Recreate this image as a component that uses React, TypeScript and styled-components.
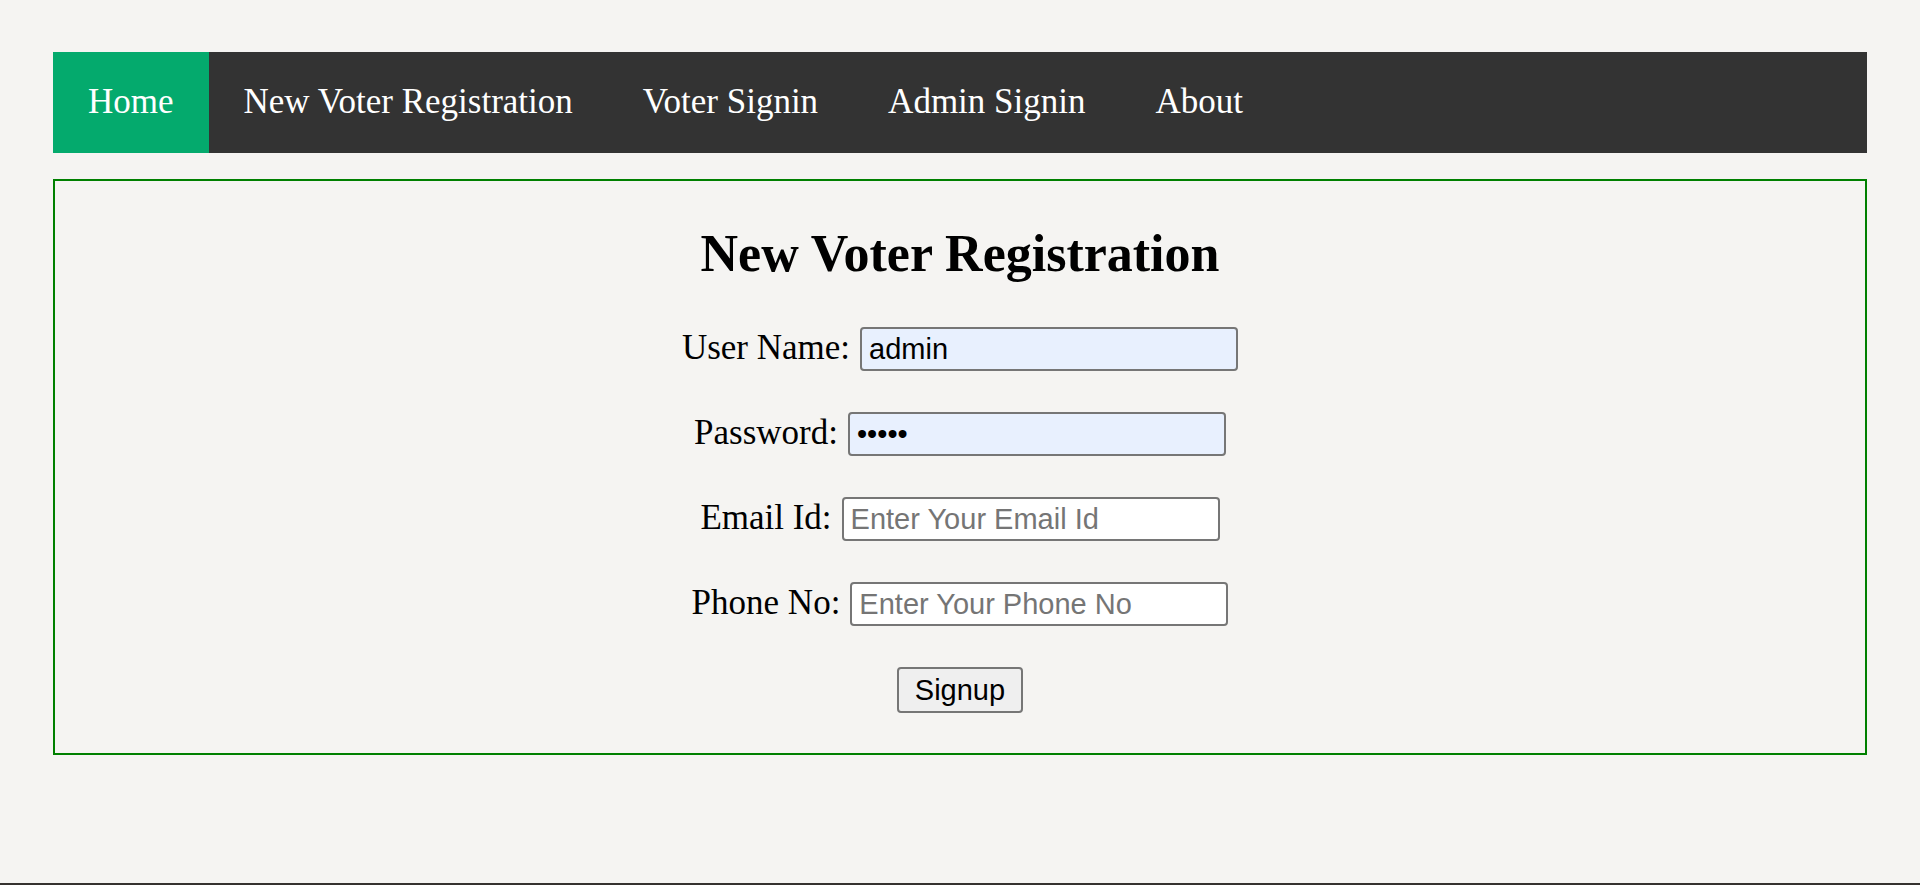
import styled, { createGlobalStyle } from "styled-components";

type NavLinkProps = {
  $active?: boolean;
};

type FieldInputProps = {
  $filled?: boolean;
};

const fields = [
  { label: "User Name:", type: "text", value: "admin", placeholder: "Enter Your User Name" },
  { label: "Password:", type: "password", value: "admin", placeholder: "Enter Your Password" },
  { label: "Email Id:", type: "text", value: "", placeholder: "Enter Your Email Id" },
  { label: "Phone No:", type: "text", value: "", placeholder: "Enter Your Phone No" },
];

const navItems = ["Home", "New Voter Registration", "Voter Signin", "Admin Signin", "About"];

export default function App() {
  return (
    <>
      <GlobalStyle />
      <Page>
        <NavBar>
          {navItems.map((item, i) => (
            <NavLink key={item} href="#" $active={i === 0}>
              {item}
            </NavLink>
          ))}
        </NavBar>
        <FormBox>
          <Heading>New Voter Registration</Heading>
          <Fields>
            {fields.map((f) => (
              <FieldRow key={f.label}>
                <FieldLabel>{f.label}</FieldLabel>
                <FieldInput
                  type={f.type}
                  defaultValue={f.value}
                  placeholder={f.placeholder}
                  $filled={f.value !== ""}
                />
              </FieldRow>
            ))}
            <SignupButton type="button">Signup</SignupButton>
          </Fields>
        </FormBox>
      </Page>
    </>
  );
}

const GlobalStyle = createGlobalStyle`
  html, body {
    margin: 0;
    padding: 0;
    background: #f5f4f2;
  }
  body {
    font-family: "Liberation Serif", "Times New Roman", serif;
  }
`;

const Page = styled.div`
  box-sizing: border-box;
  min-height: 100vh;
  padding: 52px 53px 0;
  border-bottom: 2px solid #35322f;
`;

const NavBar = styled.nav`
  display: flex;
  background: #333333;
  height: 101px;
`;

const NavLink = styled.a<NavLinkProps>`
  display: flex;
  align-items: center;
  padding: 0 35px 2px;
  font-size: 35px;
  color: #ffffff;
  text-decoration: none;
  background: ${(p) => (p.$active ? "#04aa6d" : "transparent")};
`;

const FormBox = styled.div`
  margin-top: 26px;
  border: 2px solid #008000;
  padding: 43px 0 40px;
  display: flex;
  flex-direction: column;
  align-items: center;
`;

const Heading = styled.h1`
  margin: 0 0 43px;
  font-size: 52px;
  line-height: 60px;
  font-weight: bold;
  color: #000;
`;

const Fields = styled.div`
  display: flex;
  flex-direction: column;
  align-items: center;
  gap: 41px;
`;

const FieldRow = styled.div`
  display: flex;
  align-items: baseline;
  gap: 10px;
`;

const FieldLabel = styled.label`
  font-size: 35px;
  color: #000;
`;

const FieldInput = styled.input<FieldInputProps>`
  box-sizing: border-box;
  width: 378px;
  height: 44px;
  padding: 0 7px;
  border: 2px solid #767676;
  border-radius: 4px;
  font-family: "Liberation Sans", Arial, sans-serif;
  font-size: 29px;
  color: #000;
  background: ${(p) => (p.$filled ? "#e8f0fe" : "#ffffff")};
  outline: none;

  &::placeholder {
    color: #757575;
  }
`;

const SignupButton = styled.button`
  box-sizing: border-box;
  height: 46px;
  padding: 0 16px;
  border: 2px solid #767676;
  border-radius: 4px;
  background: #efefef;
  font-family: "Liberation Sans", Arial, sans-serif;
  font-size: 29px;
  color: #000;
`;
